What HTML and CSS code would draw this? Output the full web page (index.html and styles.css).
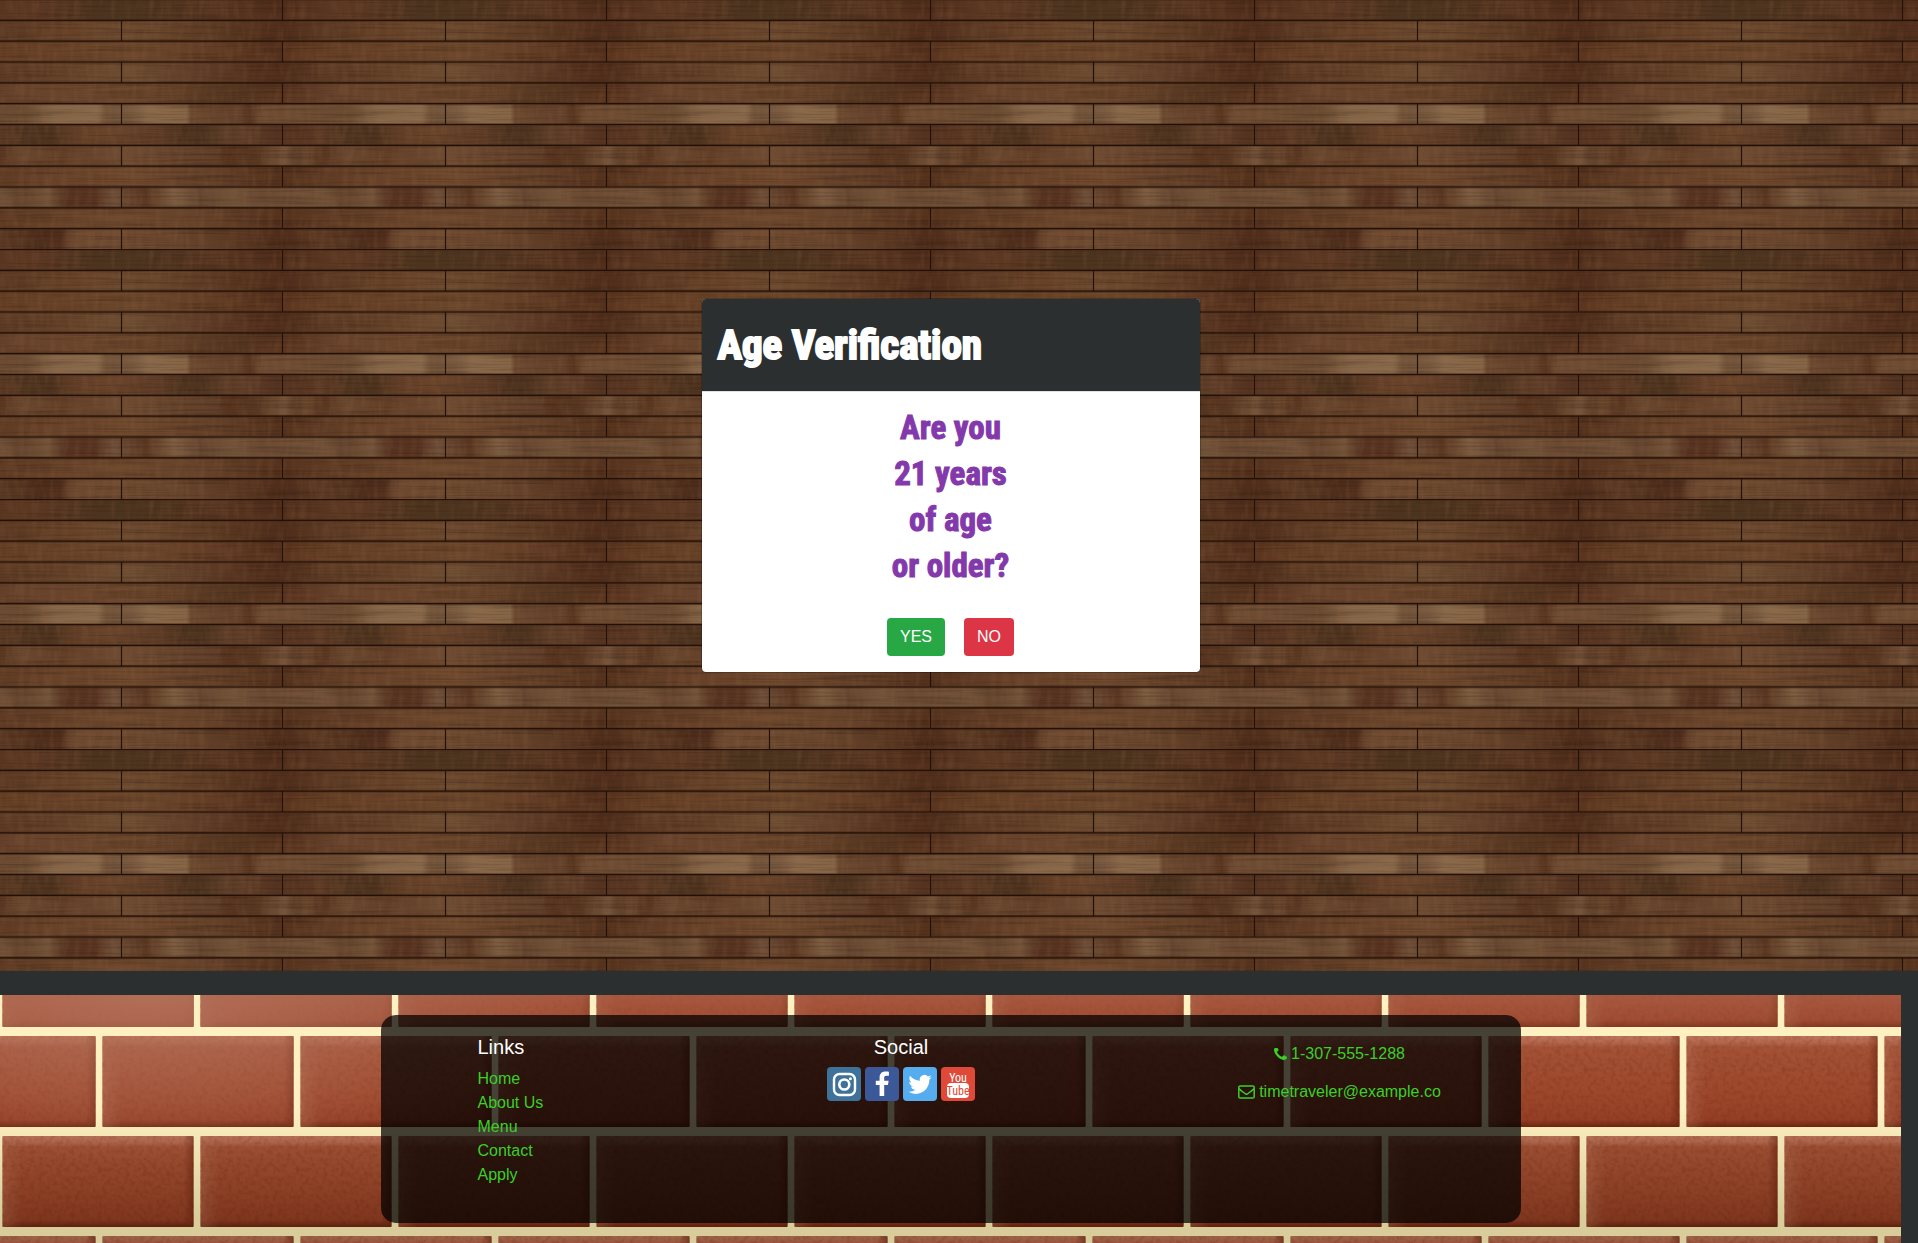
FILE: index.html
```html
<!DOCTYPE html>
<html lang="en">
<head>
  <meta charset="utf-8">
  <meta name="viewport" content="width=device-width, initial-scale=1">
  <title>Age Verification</title>
  <link rel="stylesheet" href="styles.css">
</head>
<body>
  <main class="gate">
    <section class="modal" role="dialog" aria-labelledby="gate-title">
      <header class="modal-header">
        <h1 class="modal-title" id="gate-title">Age Verification</h1>
      </header>
      <div class="modal-body">
        <p class="question">Are you<br>21 years<br>of age<br>or older?</p>
        <div class="actions">
          <button class="btn btn-yes" type="button">YES</button>
          <button class="btn btn-no" type="button">NO</button>
        </div>
      </div>
    </section>
  </main>

  <footer class="footer">
    <div class="footer-panel">
      <nav class="footer-links">
        <h2 class="footer-heading">Links</h2>
        <ul class="link-list">
          <li><a href="#home">Home</a></li>
          <li><a href="#about">About Us</a></li>
          <li><a href="#menu">Menu</a></li>
          <li><a href="#contact">Contact</a></li>
          <li><a href="#apply">Apply</a></li>
        </ul>
      </nav>
      <div class="footer-social">
        <h2 class="footer-heading">Social</h2>
        <div class="social-row">
          <a class="social instagram" href="#instagram" aria-label="Instagram">
            <svg viewBox="0 0 34 34"><rect x="7" y="7" width="21" height="21" rx="5.5" fill="none" stroke="#fff" stroke-width="2.4"/><circle cx="17.3" cy="17.5" r="5" fill="none" stroke="#fff" stroke-width="2.6"/><circle cx="23.4" cy="11.7" r="1.5" fill="#fff"/></svg>
          </a>
          <a class="social facebook" href="#facebook" aria-label="Facebook">
            <svg viewBox="0 0 34 34"><path fill="#fff" d="M14.6 29V18h-3.8v-4.300h3.800v-3.200c0-3.900 2.300-6 5.800-6 1.700 0 3.100.1 3.500.2v4h-2.400c-1.900 0-2.300.9-2.300 2.300v2.700h4.400l-.6 4.300h-3.800v11z"/></svg>
          </a>
          <a class="social twitter" href="#twitter" aria-label="Twitter">
            <svg viewBox="0 0 34 34"><path fill="#fff" transform="translate(5.4 5.8) scale(.97)" d="M23.953 4.57a10 10 0 01-2.825.775 4.958 4.958 0 002.163-2.723c-.951.555-2.005.959-3.127 1.184a4.92 4.92 0 00-8.384 4.482C7.69 8.095 4.067 6.13 1.64 3.162a4.822 4.822 0 00-.666 2.475c0 1.71.87 3.213 2.188 4.096a4.904 4.904 0 01-2.228-.616v.06a4.923 4.923 0 003.946 4.827 4.996 4.996 0 01-2.212.085 4.936 4.936 0 004.604 3.417 9.867 9.867 0 01-6.102 2.105c-.39 0-.779-.023-1.17-.067a13.995 13.995 0 007.557 2.209c9.053 0 13.998-7.496 13.998-13.985 0-.21 0-.42-.015-.63A9.935 9.935 0 0024 4.59z"/></svg>
          </a>
          <a class="social youtube" href="#youtube" aria-label="YouTube">
            <svg viewBox="0 0 34 34"><rect x="6" y="16" width="22" height="15" rx="4" fill="#fff"/><text class="yt-word" x="17" y="15" fill="#fff">You</text><text class="yt-word" x="17" y="28" fill="#de4a37">Tube</text></svg>
          </a>
        </div>
      </div>
      <address class="footer-contact">
        <a href="tel:13075551288"><svg class="icon-phone" viewBox="192 256 1408 1280" aria-hidden="true"><path fill="currentColor" d="M1600 1240q0 27-10 70.5t-21 68.5q-21 50-122 106-94 51-186 51-27 0-52.5-3.5t-57.5-12.5-47.5-14.5-55.5-20.5-49-18q-98-35-175-83-128-79-264.5-215.5t-215.5-264.5q-48-77-83-175-3-9-18-49t-20.5-55.5-14.5-47.5-12.5-57.5-3.5-52.5q0-92 51-186 56-101 106-122 25-11 68.5-21t70.5-10q14 0 21 3 18 6 53 76 11 19 30 54t35 63.5 31 53.5q3 4 17.5 25t21.5 35.5 7 28.5q0 20-28.5 50t-62 55-62 53-28.5 46q0 9 5 22.5t8.5 20.5 14 24 11.5 19q76 137 174 235t235 174q2 1 19 11.5t24 14 20.5 8.5 22.5 5q18 0 46-28.5t53-62 55-62 50-28.5q14 0 28.5 7t35.5 21.5 25 17.5q25 15 53.5 31t63.5 35 54 30q70 35 76 53 3 7 3 21z"/></svg>1-307-555-1288</a>
        <a href="mailto:timetraveler@example.co"><svg class="icon-mail" viewBox="0 0 17 14" aria-hidden="true"><g fill="none" stroke="currentColor" stroke-width="1.5"><rect x=".8" y=".9" width="15.4" height="12.2" rx="1.4"/><path d="M.9 3.6c2 2 4.200 3.500 6 4.900.8.700 2.400.700 3.200 0 1.800-1.400 4-2.900 6-4.900"/></g></svg>timetraveler@example.co</a>
      </address>
    </div>
  </footer>
</body>
</html>
```
FILE: styles.css
```css
:root {
  --slate: #2b2f30;
  --link: #3bcf27;
  --display: Impact, "Liberation Sans Narrow", "Roboto Condensed", "Open Sans Condensed", sans-serif;
  --scroll-gutter: 17px;
}

* {
  box-sizing: border-box;
}

body {
  margin: 0;
  min-height: 100vh;
  display: flex;
  flex-direction: column;
  background: var(--slate);
  color: #fff;
  font: 16px/24px "Liberation Sans", Arial, sans-serif;
}

a {
  color: var(--link);
  text-decoration: none;
}

/* Twelve staggered planks, repeated as one tile */
.gate {
  flex: 1;
  display: flex;
  align-items: center;
  justify-content: center;
  padding: 28px var(--scroll-gutter) 28px 0;
  background-color: #5f3d26;
  background-position: 0 -1px;
  background-size: 324px 250px;
  background-image: url("data:image/svg+xml,%3Csvg xmlns='http://www.w3.org/2000/svg' width='324' height='250' viewBox='0 0 324 250'%3E%3Cdefs%3E%3ClinearGradient id='a'%3E%3Cstop offset='0' stop-color='%235b3722'/%3E%3Cstop offset='.12' stop-color='%235c3823'/%3E%3Cstop offset='.3' stop-color='%234d341f'/%3E%3Cstop offset='.46' stop-color='%234d341f'/%3E%3Cstop offset='.65' stop-color='%23593722'/%3E%3Cstop offset='.86' stop-color='%23522f1c'/%3E%3Cstop offset='1' stop-color='%235b3722'/%3E%3C/linearGradient%3E%3ClinearGradient id='b'%3E%3Cstop offset='0' stop-color='%235d3a24'/%3E%3Cstop offset='.25' stop-color='%23694429'/%3E%3Cstop offset='.38' stop-color='%236d4a2f'/%3E%3Cstop offset='.5' stop-color='%2368452b'/%3E%3Cstop offset='.74' stop-color='%2357351f'/%3E%3Cstop offset='.88' stop-color='%234f2d1b'/%3E%3Cstop offset='1' stop-color='%235d3a24'/%3E%3C/linearGradient%3E%3ClinearGradient id='c'%3E%3Cstop offset='0' stop-color='%23643e24'/%3E%3Cstop offset='.43' stop-color='%236d482c'/%3E%3Cstop offset='.74' stop-color='%235e3822'/%3E%3Cstop offset='.87' stop-color='%2354301c'/%3E%3Cstop offset='.88' stop-color='%235c351f'/%3E%3Cstop offset='1' stop-color='%23643e24'/%3E%3C/linearGradient%3E%3ClinearGradient id='d'%3E%3Cstop offset='0' stop-color='%235e3b25'/%3E%3Cstop offset='.19' stop-color='%23664229'/%3E%3Cstop offset='.41' stop-color='%236f4e33'/%3E%3Cstop offset='.56' stop-color='%2362402a'/%3E%3Cstop offset='.85' stop-color='%23522e1c'/%3E%3Cstop offset='.9' stop-color='%2351301d'/%3E%3Cstop offset='1' stop-color='%235e3b25'/%3E%3C/linearGradient%3E%3ClinearGradient id='e'%3E%3Cstop offset='0' stop-color='%2365402a'/%3E%3Cstop offset='.37' stop-color='%236e492e'/%3E%3Cstop offset='.62' stop-color='%235c3b24'/%3E%3Cstop offset='.74' stop-color='%23553620'/%3E%3Cstop offset='.88' stop-color='%235a3520'/%3E%3Cstop offset='1' stop-color='%2365402a'/%3E%3C/linearGradient%3E%3ClinearGradient id='f'%3E%3Cstop offset='0' stop-color='%236d4c33'/%3E%3Cstop offset='.08' stop-color='%236f5035'/%3E%3Cstop offset='.17' stop-color='%23876749'/%3E%3Cstop offset='.3' stop-color='%238a6b4c'/%3E%3Cstop offset='.33' stop-color='%2372543a'/%3E%3Cstop offset='.41' stop-color='%237b5c42'/%3E%3Cstop offset='.46' stop-color='%238a6a4b'/%3E%3Cstop offset='.575' stop-color='%23856546'/%3E%3Cstop offset='.59' stop-color='%236a482f'/%3E%3Cstop offset='.74' stop-color='%2364412b'/%3E%3Cstop offset='.77' stop-color='%2358351f'/%3E%3Cstop offset='.81' stop-color='%236e4c33'/%3E%3Cstop offset='1' stop-color='%236d4c33'/%3E%3C/linearGradient%3E%3ClinearGradient id='g'%3E%3Cstop offset='0' stop-color='%235c3a24'/%3E%3Cstop offset='.09' stop-color='%234d331f'/%3E%3Cstop offset='.16' stop-color='%234f341f'/%3E%3Cstop offset='.23' stop-color='%23633f27'/%3E%3Cstop offset='.34' stop-color='%236a452b'/%3E%3Cstop offset='.5' stop-color='%235f3d27'/%3E%3Cstop offset='.57' stop-color='%234d331f'/%3E%3Cstop offset='.64' stop-color='%234d331f'/%3E%3Cstop offset='.74' stop-color='%2362402a'/%3E%3Cstop offset='.87' stop-color='%23543220'/%3E%3Cstop offset='1' stop-color='%235c3a24'/%3E%3C/linearGradient%3E%3ClinearGradient id='h'%3E%3Cstop offset='0' stop-color='%23583520'/%3E%3Cstop offset='.06' stop-color='%236a482f'/%3E%3Cstop offset='.19' stop-color='%23654029'/%3E%3Cstop offset='.37' stop-color='%236d4a31'/%3E%3Cstop offset='.67' stop-color='%2362402a'/%3E%3Cstop offset='.7' stop-color='%2356331e'/%3E%3Cstop offset='.8' stop-color='%235a3923'/%3E%3Cstop offset='.88' stop-color='%2375543a'/%3E%3Cstop offset='.91' stop-color='%2360402a'/%3E%3Cstop offset='.95' stop-color='%236a482e'/%3E%3Cstop offset='1' stop-color='%23583520'/%3E%3C/linearGradient%3E%3ClinearGradient id='i'%3E%3Cstop offset='0' stop-color='%23603c25'/%3E%3Cstop offset='.38' stop-color='%23704a2e'/%3E%3Cstop offset='.62' stop-color='%2365422a'/%3E%3Cstop offset='.87' stop-color='%2355321d'/%3E%3Cstop offset='1' stop-color='%23603c25'/%3E%3C/linearGradient%3E%3ClinearGradient id='j'%3E%3Cstop offset='0' stop-color='%23735339'/%3E%3Cstop offset='.06' stop-color='%2365452e'/%3E%3Cstop offset='.15' stop-color='%23735439'/%3E%3Cstop offset='.2' stop-color='%23583522'/%3E%3Cstop offset='.29' stop-color='%23583321'/%3E%3Cstop offset='.35' stop-color='%2371513a'/%3E%3Cstop offset='.45' stop-color='%235c3823'/%3E%3Cstop offset='.49' stop-color='%236a4930'/%3E%3Cstop offset='.54' stop-color='%237d5e42'/%3E%3Cstop offset='.62' stop-color='%23654630'/%3E%3Cstop offset='.72' stop-color='%2375563b'/%3E%3Cstop offset='.8' stop-color='%236b4a33'/%3E%3Cstop offset='1' stop-color='%23735339'/%3E%3C/linearGradient%3E%3ClinearGradient id='k'%3E%3Cstop offset='0' stop-color='%235c3a24'/%3E%3Cstop offset='.11' stop-color='%2350301d'/%3E%3Cstop offset='.19' stop-color='%2353301e'/%3E%3Cstop offset='.22' stop-color='%236d4930'/%3E%3Cstop offset='.37' stop-color='%236e4a30'/%3E%3Cstop offset='.5' stop-color='%236a472e'/%3E%3Cstop offset='.74' stop-color='%235a3822'/%3E%3Cstop offset='.87' stop-color='%234e2c1a'/%3E%3Cstop offset='1' stop-color='%235c3a24'/%3E%3C/linearGradient%3E%3Cfilter id='s' x='0' y='0' width='1' height='1' color-interpolation-filters='sRGB'%3E%3CfeTurbulence type='fractalNoise' baseFrequency='.012 .45' numOctaves='2' seed='4' stitchTiles='stitch'/%3E%3CfeColorMatrix values='0 0 0 0 .12 0 0 0 0 .05 0 0 0 0 .01 .6 0 0 0 -.26'/%3E%3C/filter%3E%3Cfilter id='t' x='0' y='0' width='1' height='1' color-interpolation-filters='sRGB'%3E%3CfeTurbulence type='fractalNoise' baseFrequency='.16 .04' numOctaves='2' seed='9' stitchTiles='stitch'/%3E%3CfeColorMatrix values='0 0 0 0 .6 0 0 0 0 .42 0 0 0 0 .28 .4 0 0 0 -.17'/%3E%3C/filter%3E%3C/defs%3E%3Cg transform='scale(1 .99206)'%3E%3Crect width='324' height='21' fill='url(%23a)'/%3E%3Crect y='21' width='324' height='21' fill='url(%23b)'/%3E%3Crect y='42' width='324' height='21' fill='url(%23c)'/%3E%3Crect y='63' width='324' height='21' fill='url(%23d)'/%3E%3Crect y='84' width='324' height='21' fill='url(%23e)'/%3E%3Crect y='105' width='324' height='21' fill='url(%23f)'/%3E%3Crect y='126' width='324' height='21' fill='url(%23g)'/%3E%3Crect y='147' width='324' height='21' fill='url(%23h)'/%3E%3Crect y='168' width='324' height='21' fill='url(%23i)'/%3E%3Crect y='189' width='324' height='21' fill='url(%23j)'/%3E%3Crect y='210' width='324' height='21' fill='url(%23i)'/%3E%3Crect y='231' width='324' height='21' fill='url(%23k)'/%3E%3C/g%3E%3Crect width='324' height='250' filter='url(%23s)'/%3E%3Crect width='324' height='250' filter='url(%23t)'/%3E%3Cpath d='M0 .5H324M0 21.300H324M0 42.200H324M0 63H324M0 83.800H324M0 104.700H324M0 125.500H324M0 146.300H324M0 167.200H324M0 188H324M0 208.800H324M0 229.700H324' stroke='%23402414' stroke-width='3' opacity='.45'/%3E%3Cpath d='M0 .5H324M0 21.300H324M0 42.200H324M0 63H324M0 83.800H324M0 104.700H324M0 125.500H324M0 146.300H324M0 167.200H324M0 188H324M0 208.800H324M0 229.700H324M121.500 21v21M121.500 63v21M121.500 105v21M121.500 146v21M121.500 188v21M121.500 230v20M282.500 0v21M282.500 42v21M282.500 84v21M282.500 125v21M282.500 167v21M282.500 209v21' stroke='%23231108' stroke-width='1.200'/%3E%3C/svg%3E");
}

.modal {
  width: 100%;
  max-width: 500px;
  border: 1px solid rgba(0, 0, 0, .2);
  border-radius: 5px;
  background: #fff;
  background-clip: padding-box;
  overflow: hidden;
}

.modal-header {
  padding: 16px;
  border-bottom: 1px solid #dee2e6;
  background: var(--slate);
}

.modal-title {
  margin: 0;
  font: bold 41px/60px var(--display);
  -webkit-text-stroke: 2px #fff;
}

.modal-body {
  padding: 13px 16px 16px;
  text-align: center;
}

.question {
  margin: 0 0 29px;
  color: #8338ab;
  font: bold 33px/46px var(--display);
  -webkit-text-stroke: 1px #8338ab;
}

.actions {
  display: flex;
  justify-content: center;
  gap: 19px;
}

.btn {
  padding: 6px 12px;
  border: 1px solid transparent;
  border-radius: 4px;
  color: #fff;
  font: inherit;
  cursor: pointer;
}

.btn-yes {
  background: #28a745;
}

.btn-no {
  background: #dc3545;
}

/* Brick wall: soft light and shade over a two-course tile */
.footer {
  margin: 24px var(--scroll-gutter) 0 0;
  padding: 20px 0;
  background-color: #9a472c;
  background-position: 0 0, 0 0, 0 0, 0 32px;
  background-size: auto, auto, auto, 198px 200px;
  background-blend-mode: lighten, lighten, multiply, normal;
  background-image:
    radial-gradient(ellipse 440px 170px at 150px 0, rgba(180, 114, 92, .85), rgba(180, 114, 92, 0)),
    linear-gradient(rgba(176, 100, 76, .6), rgba(176, 100, 76, 0) 25%),
    linear-gradient(#fff 45%, #d9d9cc 90%),
    url("data:image/svg+xml,%3Csvg xmlns='http://www.w3.org/2000/svg' width='198' height='200' viewBox='0 0 198 200'%3E%3Cdefs%3E%3ClinearGradient id='b' x2='0' y2='1'%3E%3Cstop offset='0' stop-color='%23bd755c'/%3E%3Cstop offset='.07' stop-color='%23b4694e'/%3E%3Cstop offset='.12' stop-color='%23a35236'/%3E%3Cstop offset='.6' stop-color='%239d482c'/%3E%3Cstop offset='.92' stop-color='%23964026'/%3E%3Cstop offset='1' stop-color='%23702611'/%3E%3C/linearGradient%3E%3ClinearGradient id='e'%3E%3Cstop offset='0' stop-color='%23c07a60' stop-opacity='.4'/%3E%3Cstop offset='.05' stop-color='%23b06a50' stop-opacity='.25'/%3E%3Cstop offset='.1' stop-color='%23b06a50' stop-opacity='0'/%3E%3Cstop offset='.95' stop-color='%236b2410' stop-opacity='0'/%3E%3Cstop offset='1' stop-color='%236b2410' stop-opacity='.6'/%3E%3C/linearGradient%3E%3Cfilter id='n' x='0' y='0' width='1' height='1' color-interpolation-filters='sRGB'%3E%3CfeTurbulence type='fractalNoise' baseFrequency='.22' numOctaves='3' seed='3' stitchTiles='stitch'/%3E%3CfeColorMatrix values='0 0 0 0 .4 0 0 0 0 .12 0 0 0 0 .04 .5 0 0 0 -.2'/%3E%3C/filter%3E%3Cg id='r'%3E%3Crect width='191' height='91' rx='1' fill='url(%23b)'/%3E%3Crect width='191' height='91' rx='1' fill='url(%23e)'/%3E%3Crect width='191' height='91' filter='url(%23n)'/%3E%3C/g%3E%3C/defs%3E%3Crect width='198' height='200' fill='%23fff0c2'/%3E%3Cuse href='%23r' x='102.500' y='9'/%3E%3Cuse href='%23r' x='-95.500' y='9'/%3E%3Cuse href='%23r' x='2.500' y='109'/%3E%3C/svg%3E");
}

.footer-panel {
  display: grid;
  grid-template-columns: 166fr 515fr 362fr;
  max-width: 1140px;
  margin: 0 auto;
  padding: 20px 0 20px 97px;
  border-radius: 15px;
  background: rgba(0, 0, 0, .73);
}

.footer-heading {
  margin: 0 0 8px;
  font-size: 20px;
  font-weight: 400;
  line-height: 24px;
}

.link-list {
  margin: 0 0 16px;
  padding: 0;
  list-style: none;
}

.footer-social {
  text-align: center;
}

.social-row {
  display: flex;
  justify-content: center;
  gap: 4px;
}

.social {
  width: 34px;
  height: 34px;
  border-radius: 4px;
}

.social svg {
  display: block;
}

.instagram {
  background: #3f729b;
}

.facebook {
  background: #3b5998;
}

.twitter {
  background: #55acee;
}

.youtube {
  background: #de4a37;
}

.yt-word {
  font: 12px "Liberation Sans Narrow", "Roboto Condensed", sans-serif;
  text-anchor: middle;
}

.footer-contact {
  display: flex;
  flex-direction: column;
  align-items: center;
  gap: 14px;
  padding-top: 7px;
  font-style: normal;
}

.icon-phone,
.icon-mail {
  margin-right: 4px;
  vertical-align: -1px;
}

.icon-phone {
  width: 13px;
  height: 12px;
}

.icon-mail {
  width: 17px;
  height: 14px;
  vertical-align: -2px;
}
```
